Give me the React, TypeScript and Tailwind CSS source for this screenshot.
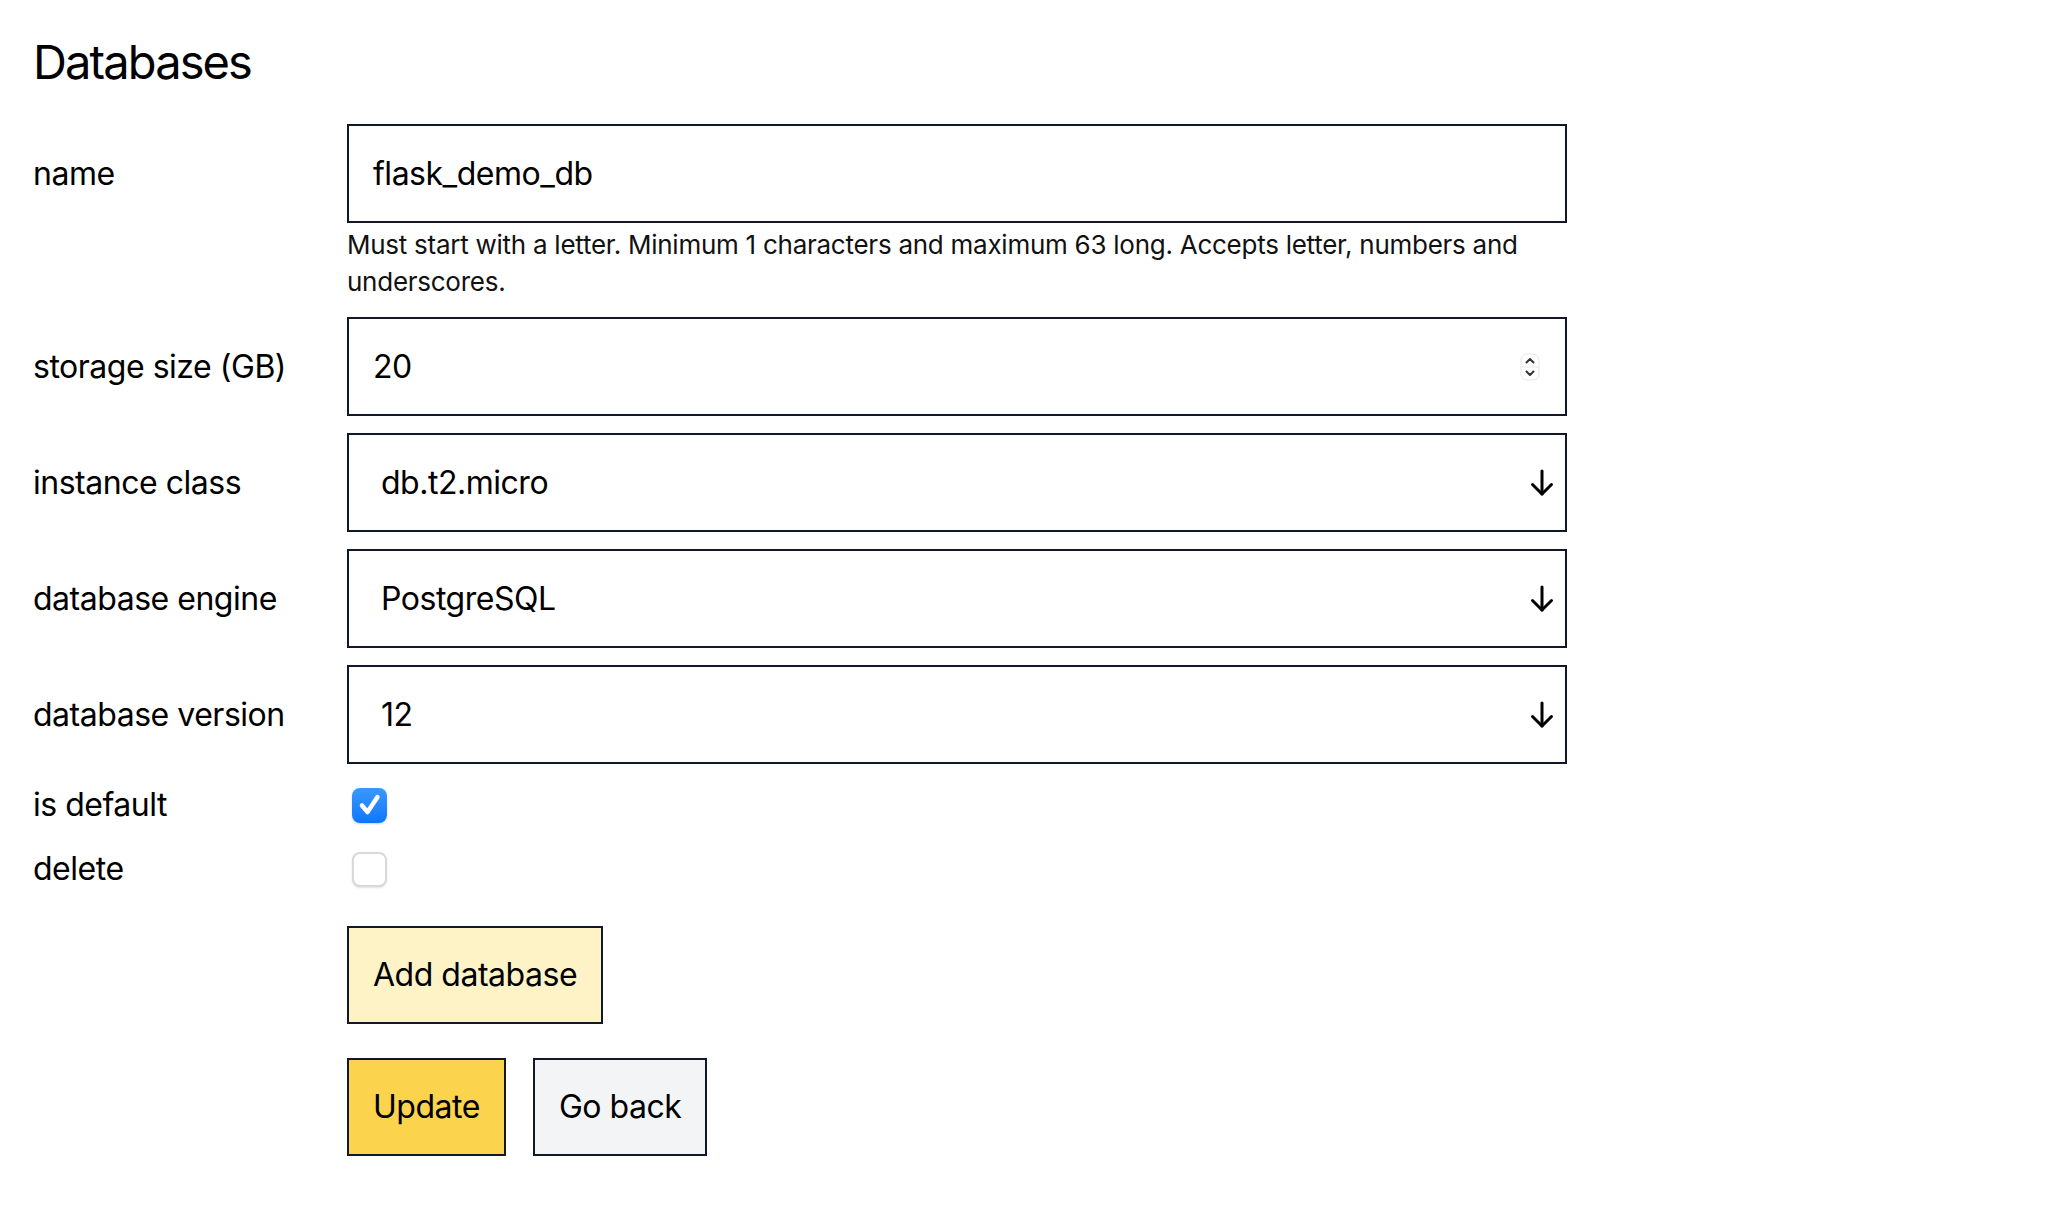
import type { ReactNode } from 'react';

function Row({ label, children, className = '' }: { label: string; children: ReactNode; className?: string }) {
  return (
    <div className={`flex items-center ${className}`}>
      <label className="w-[314px] shrink-0 text-[32px] leading-[40px] text-black">{label}</label>
      {children}
    </div>
  );
}

function DownArrow() {
  return (
    <svg width="24" height="28" viewBox="0 0 24 28" fill="none" stroke="#000" strokeWidth="3" strokeLinecap="round" strokeLinejoin="round">
      <path d="M12 2v23" />
      <path d="M2.5 15.5 12 25l9.5-9.5" />
    </svg>
  );
}

function Spinner() {
  return (
    <svg width="20" height="28" viewBox="0 0 20 28" fill="none">
      <rect x="1" y="1" width="18" height="26" rx="6" fill="#fff" stroke="#e5e7eb" />
      <path d="M1.5 14h17" stroke="#e5e7eb" />
      <path d="M6.5 9.5 10 6l3.5 3.5" stroke="#333" strokeWidth="2" strokeLinecap="round" strokeLinejoin="round" />
      <path d="M6.5 18.5 10 22l3.5-3.5" stroke="#333" strokeWidth="2" strokeLinecap="round" strokeLinejoin="round" />
    </svg>
  );
}

function Select({ value }: { value: string }) {
  return (
    <div className="flex h-[99px] w-[1220px] items-center justify-between border-2 border-[#111827] bg-white pl-[32px] pr-[11px]">
      <span className="text-[32px] text-black">{value}</span>
      <DownArrow />
    </div>
  );
}

function Checkbox({ checked }: { checked: boolean }) {
  if (checked) {
    return (
      <span className="ml-[5px] flex h-[35px] w-[35px] items-center justify-center rounded-[8px] bg-gradient-to-b from-[#3a98ff] to-[#0a76ff] shadow-[0_1px_2px_rgba(0,0,0,0.2)]">
        <svg width="26" height="26" viewBox="0 0 26 26" fill="none" stroke="#fff" strokeWidth="4.5" strokeLinecap="round" strokeLinejoin="round">
          <path d="M5 13.5 10.5 20 20.5 5" />
        </svg>
      </span>
    );
  }
  return (
    <span className="ml-[5px] block h-[35px] w-[35px] rounded-[8px] border-2 border-[#d9d9d9] bg-white shadow-[0_1px_2px_rgba(0,0,0,0.12)]" />
  );
}

export default function App() {
  return (
    <div className="min-h-screen bg-white px-[33px] pt-[30px] font-['Inter','Liberation_Sans',sans-serif] tracking-[-0.03em] text-black">
      <h1 className="text-[47px] leading-[64px] font-normal tracking-[-0.04em]">Databases</h1>

      <Row label="name" className="mt-[30px]">
        <div className="flex h-[99px] w-[1220px] items-center border-2 border-[#111827] px-[24px] text-[32px]">
          flask_demo_db
        </div>
      </Row>
      <div className="ml-[314px] w-[1220px] pt-[3px] text-[26px] leading-[37px] tracking-[-0.01em] text-[#111]">
        Must start with a letter. Minimum 1 characters and maximum 63 long. Accepts letter, numbers and
        <br />
        underscores.
      </div>

      <Row label="storage size (GB)" className="mt-[17px]">
        <div className="flex h-[99px] w-[1220px] items-center justify-between border-2 border-[#111827] pl-[24px] pr-[25px] text-[32px]">
          <span>20</span>
          <Spinner />
        </div>
      </Row>

      <Row label="instance class" className="mt-[17px]">
        <Select value="db.t2.micro" />
      </Row>
      <Row label="database engine" className="mt-[17px]">
        <Select value="PostgreSQL" />
      </Row>
      <Row label="database version" className="mt-[17px]">
        <Select value="12" />
      </Row>

      <Row label="is default" className="mt-[9px] h-[64px]">
        <Checkbox checked />
      </Row>
      <Row label="delete" className="h-[64px]">
        <Checkbox checked={false} />
      </Row>

      <div className="ml-[314px] mt-[25px]">
        <button className="h-[98px] border-2 border-[#111827] bg-[#fef3c7] px-[24px] text-[32px] text-black">
          Add database
        </button>
      </div>
      <div className="ml-[314px] mt-[34px] flex gap-[27px]">
        <button className="h-[98px] border-2 border-[#111827] bg-[#fcd34d] px-[24px] text-[32px] text-black">
          Update
        </button>
        <button className="h-[98px] border-2 border-[#111827] bg-[#f3f4f6] px-[24px] text-[32px] text-black">
          Go back
        </button>
      </div>
    </div>
  );
}
